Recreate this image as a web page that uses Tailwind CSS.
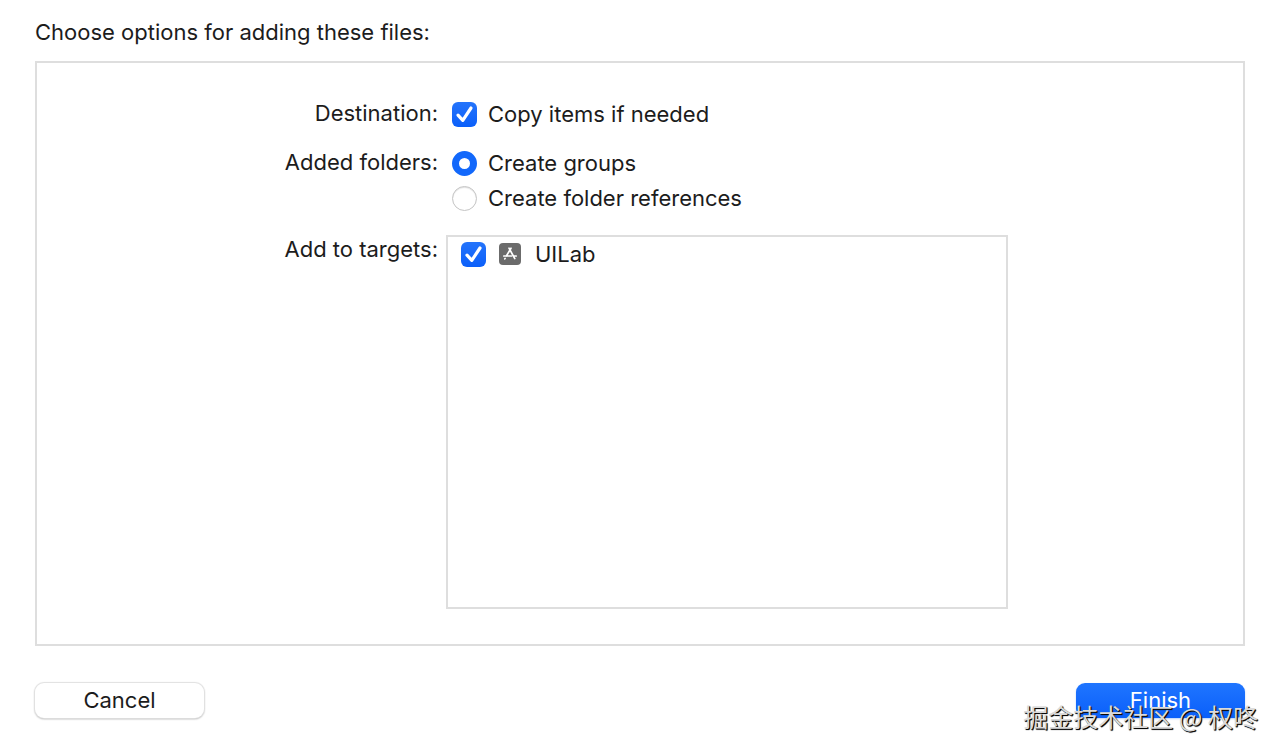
<!DOCTYPE html>
<html lang="en">
<head>
<meta charset="utf-8">
<meta name="viewport" content="width=device-width, initial-scale=1">
<title>Choose options for adding these files</title>
<script src="https://cdn.jsdelivr.net/npm/@tailwindcss/browser@4"></script>
</head>
<body class="bg-white font-['Inter','Noto_Sans_CJK_SC',sans-serif] text-[22px] leading-7 text-[#1c1c1c]">
<form class="relative flex min-h-screen flex-col px-[35px] pt-[18px] pb-[34px]">
  <h1>Choose options for adding these files:</h1>

  <div class="mt-[15px] grid grid-cols-[1fr_2fr] border-2 border-[#dedede] pt-9 pb-[35px]">
    <div id="destination" class="pr-px text-right">Destination:</div>
    <div role="group" aria-labelledby="destination" class="flex flex-col pl-[13px] pt-px">
      <label class="flex items-center gap-[11px]">
        <span class="grid size-[25px]">
          <input type="checkbox" checked class="peer col-start-1 row-start-1 size-[25px] appearance-none rounded-md border border-[#c8c8c8] bg-white checked:border-0 checked:bg-linear-to-b checked:from-[#2474fb] checked:to-[#0a5ffa]">
          <svg viewBox="0 0 25 25" class="pointer-events-none col-start-1 row-start-1 hidden size-[25px] peer-checked:block" fill="none" stroke="#fff" stroke-width="3.2" stroke-linecap="round" stroke-linejoin="round" aria-hidden="true"><path d="M6 13.2 10.8 18.4 19 6"/></svg>
        </span>
        Copy items if needed
      </label>
    </div>

    <div id="folders" class="mt-5 pr-px text-right">Added folders:</div>
    <div role="radiogroup" aria-labelledby="folders" class="mt-[21px] flex flex-col gap-[7px] pl-[13px]">
      <label class="flex items-center gap-[11px]">
        <input type="radio" name="folders" checked class="size-[25px] appearance-none rounded-full border border-[#c4c4c4] bg-white checked:border-[7px] checked:border-[#1268fb]">
        Create groups
      </label>
      <label class="flex items-center gap-[11px]">
        <input type="radio" name="folders" class="size-[25px] appearance-none rounded-full border border-[#c4c4c4] bg-white shadow-[inset_0_1px_1px_#e2e2e2] checked:border-[7px] checked:border-[#1268fb]">
        Create folder references
      </label>
    </div>

    <div id="targets" class="mt-[23px] pr-px text-right">Add to targets:</div>
    <div role="group" aria-labelledby="targets" class="mt-[23px] mr-[235px] ml-[7px] min-h-[374px] border-2 border-[#dedede] px-[13px] pt-[3px]">
      <label class="flex items-center">
        <span class="grid size-[25px]">
          <input type="checkbox" checked class="peer col-start-1 row-start-1 size-[25px] appearance-none rounded-md border border-[#c8c8c8] bg-white checked:border-0 checked:bg-linear-to-b checked:from-[#2474fb] checked:to-[#0a5ffa]">
          <svg viewBox="0 0 25 25" class="pointer-events-none col-start-1 row-start-1 hidden size-[25px] peer-checked:block" fill="none" stroke="#fff" stroke-width="3.2" stroke-linecap="round" stroke-linejoin="round" aria-hidden="true"><path d="M6 13.2 10.8 18.4 19 6"/></svg>
        </span>
        <svg viewBox="0 0 22 22" class="ml-[13px] mr-[14px] size-[22px]" aria-hidden="true">
          <rect width="22" height="22" rx="4" fill="#6b6b6b"/>
          <g fill="none" stroke="#fff" stroke-width="1.7" stroke-linecap="round"><path d="M12 5.2 7.4 13M10 5.2 15.8 15.6M4.8 13H12.4M15.2 13H17.2M6.1 15.4 5.8 15.9"/></g>
        </svg>
        UILab
      </label>
    </div>
  </div>

  <div class="mt-[37px] flex justify-between">
    <button type="button" class="h-[35px] w-[169px] rounded-[9px] bg-white pb-[2px] shadow-[0_0_1px_1px_#e0e0e0,0_1px_2px_#999999]">Cancel</button>
    <button type="submit" class="h-[35px] w-[169px] rounded-[9px] bg-linear-to-b from-[#1f75ff] to-[#0a5ffa] pb-[2px] text-white shadow-[0_1px_2px_#b8d0f8]">Finish</button>
  </div>

  <div class="pointer-events-none absolute right-[22px] bottom-[23px] font-['Noto_Sans_CJK_SC',sans-serif] text-[25px] leading-7 whitespace-nowrap text-[#dadada] [text-shadow:1px_1px_1px_#000000,1px_1px_0_#444444]">掘金技术社区 @ 权咚</div>
</form>
</body>
</html>
